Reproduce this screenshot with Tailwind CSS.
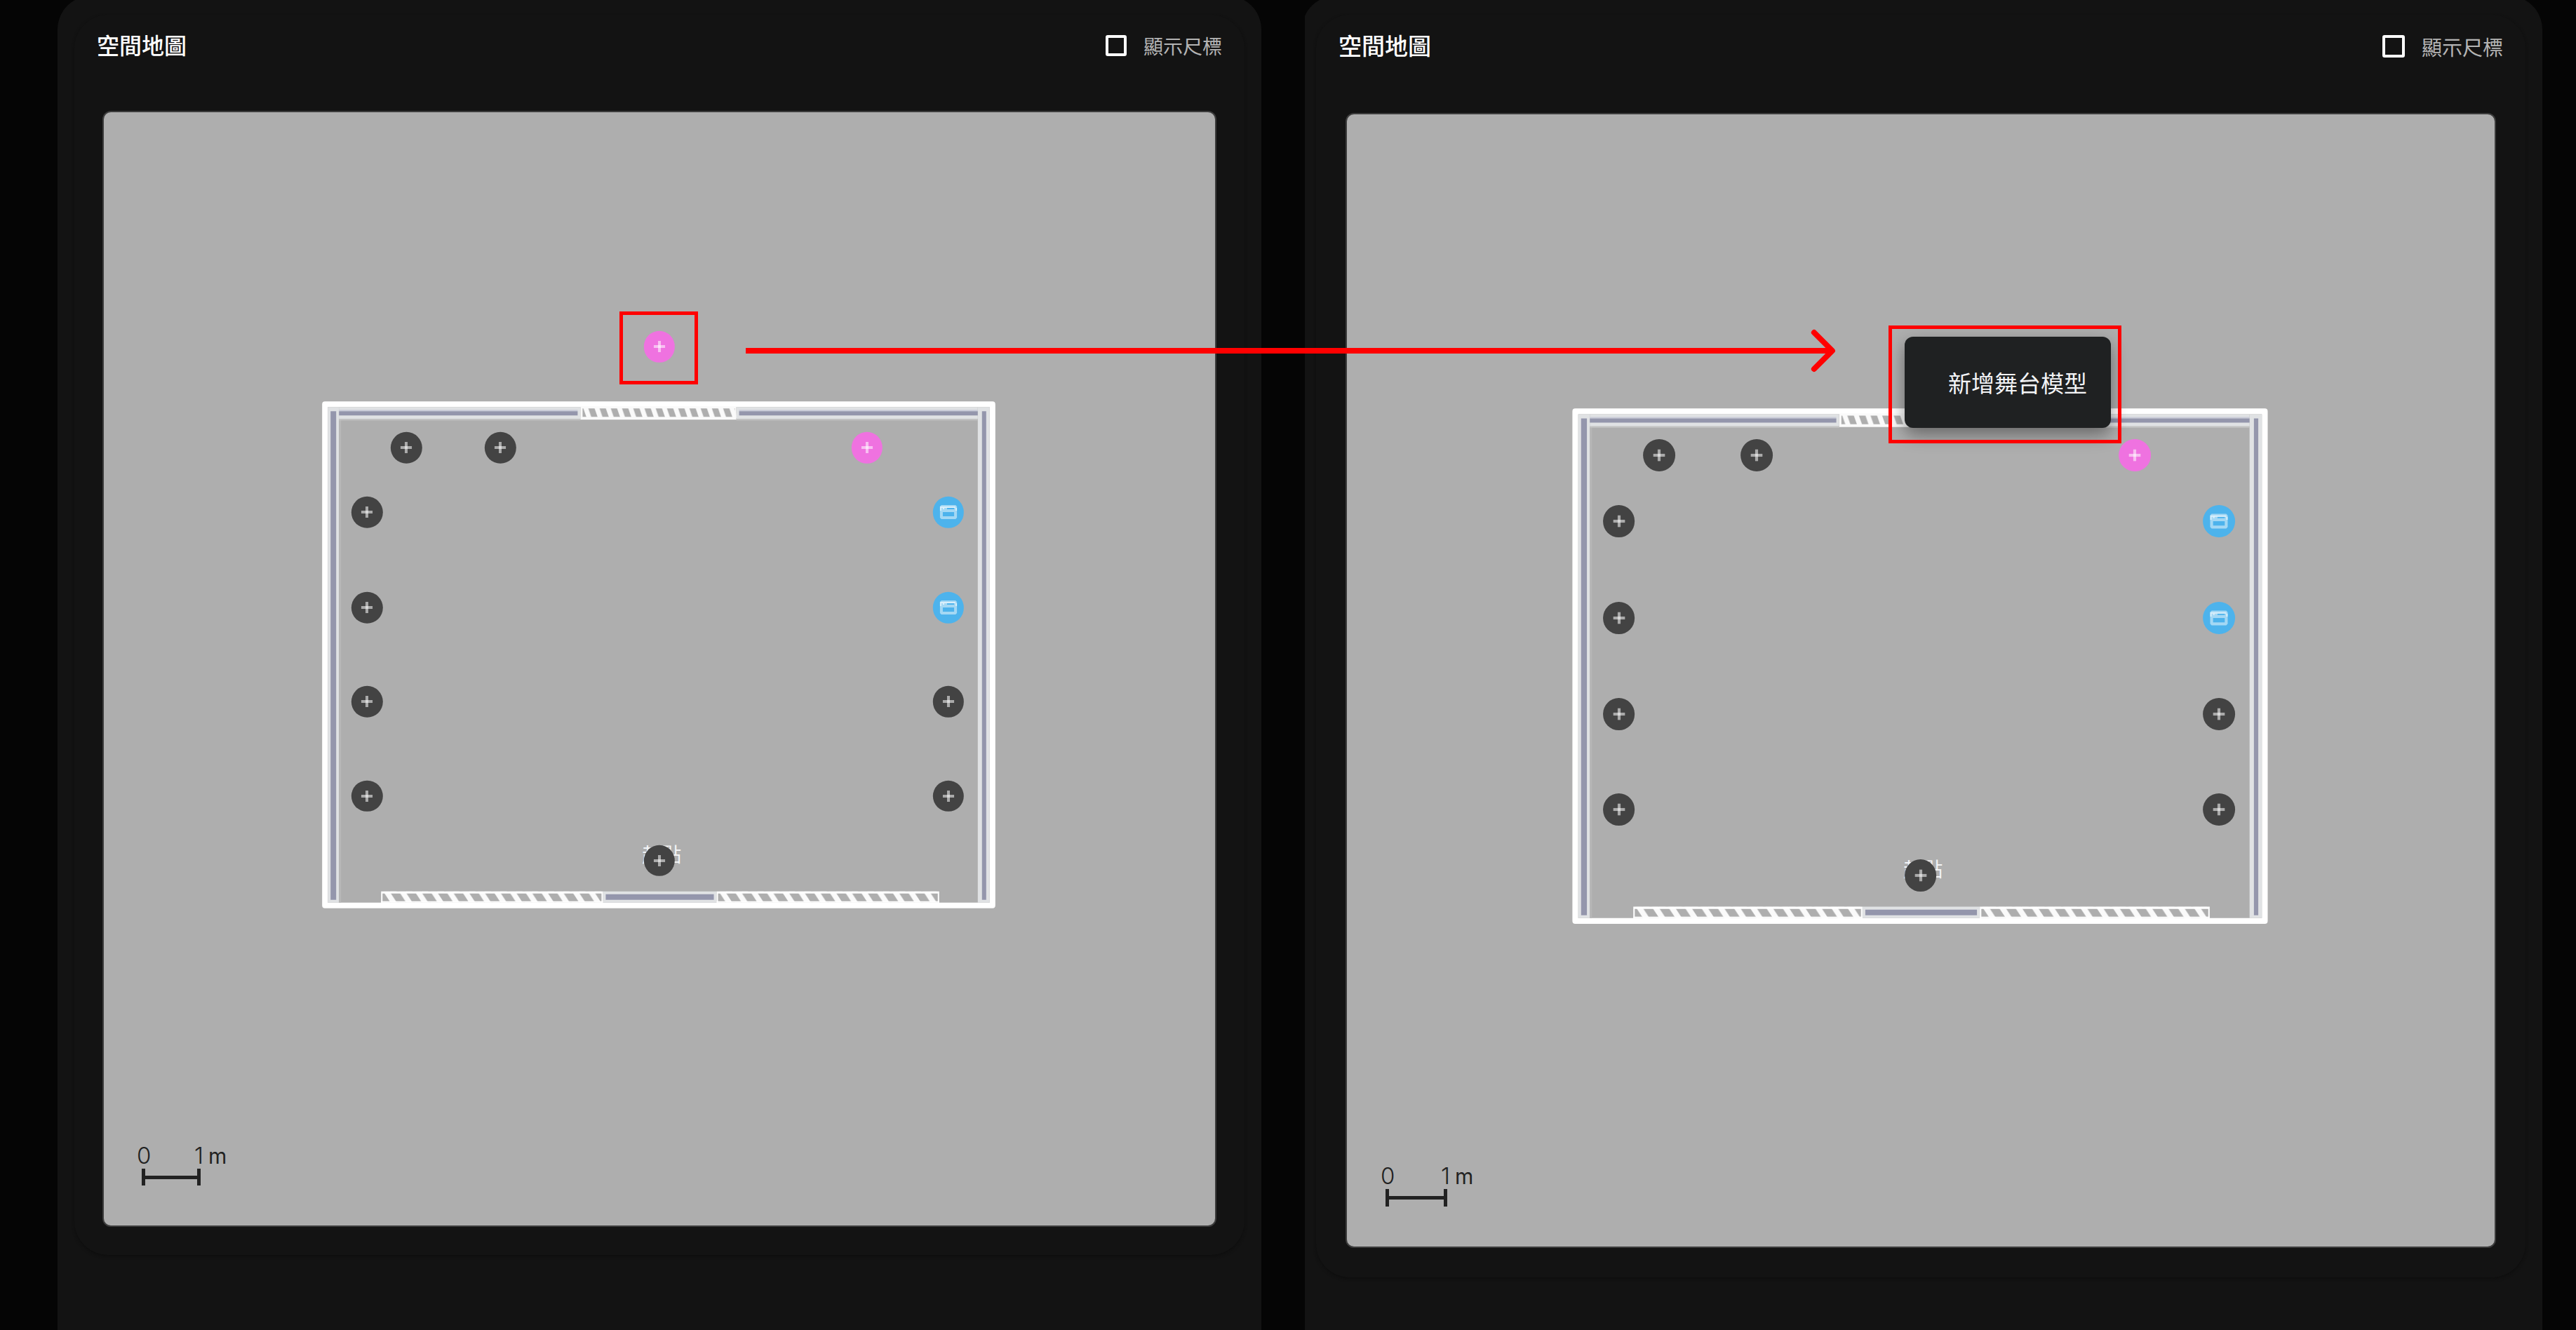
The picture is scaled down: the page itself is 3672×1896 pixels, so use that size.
<!DOCTYPE html>
<html lang="zh-Hant">
<head>
<meta charset="utf-8">
<title>空間地圖</title>
<script src="https://cdn.jsdelivr.net/npm/@tailwindcss/browser@4"></script>
</head>
<body class="bg-[#050505] font-['Noto_Sans_CJK_TC',sans-serif] text-white">

<!-- shared shapes -->
<svg class="absolute size-0" aria-hidden="true">
  <defs>
    <symbol id="plus" viewBox="0 0 44 44">
      <path d="M14 22H30" stroke="#fff" stroke-opacity=".55" stroke-width="4"/>
      <path d="M22 14V30" stroke="#fff" stroke-opacity=".55" stroke-width="4"/>
    </symbol>
    <symbol id="window" viewBox="0 0 44 44">
      <path fill="#a4d8f4" fill-rule="evenodd" d="M12 12H32L34 14V30L32 32H12L10 30V14ZM20 16V18H30V16ZM14 22V28H30V22Z"/>
      <path fill="#fff" fill-opacity=".6" d="M12 14H32V16H12ZM10 14h2v6h-2ZM32 16h2v4h-2ZM14 16h2v2h-2Z"/>
    </symbol>
    <pattern id="hatch-wide" patternUnits="userSpaceOnUse" x="544" y="1270" width="22.4" height="16">
      <path d="M3 0H12L22.4 16H13.4Z" fill="#fafafa"/>
    </pattern>
    <pattern id="hatch-wide-right" patternUnits="userSpaceOnUse" x="1022" y="1270" width="22.4" height="16">
      <path d="M3 0H12L22.4 16H13.4Z" fill="#fafafa"/>
    </pattern>
    <pattern id="hatch-narrow" patternUnits="userSpaceOnUse" x="828" y="580" width="16" height="16">
      <path d="M3.5 0H10.5L16 16H9Z" fill="#fafafa"/>
    </pattern>
    <symbol id="room" viewBox="149 160 1583 1586" preserveAspectRatio="none">
      <rect x="464" y="576" width="951" height="714" fill="none" stroke="#fff" stroke-width="8" stroke-linejoin="round"/>
      <!-- side walls -->
      <path fill="#e0e2e4" d="M468 580h16v706h-16ZM1394 580h17v706h-17Z"/>
      <path fill="#b7b7b7" d="M484 596h3v690h-3Z"/>
      <path fill="#9496ac" d="M472 586h8v696h-8ZM1400 586h6v696h-6Z"/>
      <!-- top wall -->
      <path fill="#e0e2e4" d="M484 580H828V597H484ZM1050 580H1394V597H1050Z"/>
      <path fill="#c9cbd8" d="M484 584H824V586H484ZM1054 584H1394V586H1054Z"/>
      <path fill="#9496ac" d="M484 586H824V592H484ZM1054 586H1394V592H1054Z"/>
      <path fill="#c4c4c4" d="M484 597H828V599H484ZM1050 597H1394V599H1050Z"/>
      <rect x="828" y="580" width="222" height="18" fill="#aeaeae"/>
      <rect x="828" y="580" width="222" height="16" fill="url(#hatch-narrow)"/>
      <path fill="#fafafa" d="M828 579H1050V582H828ZM828 594H1050V598H828ZM828 580h3v16h-3ZM1048 580h2v16h-2Z"/>
      <!-- bottom wall -->
      <path fill="#e0e2e4" d="M860 1270H1022V1286H860Z"/>
      <path fill="#9496ac" d="M864 1274H1018V1282H864Z"/>
      <rect x="544" y="1270" width="316" height="16" fill="url(#hatch-wide)"/>
      <rect x="1022" y="1270" width="317" height="16" fill="url(#hatch-wide-right)"/>
      <path fill="#fff" d="M544 1270H860V1273H544ZM544 1270h2v16h-2ZM858 1270h2v16h-2ZM1022 1270H1339V1273H1022ZM1022 1270h2v16h-2ZM1337 1270h2v16h-2Z"/>
      <path fill="#fff" d="M544 1284H860V1286H544ZM1022 1284H1339V1286H1022Z"/>
    </symbol>
  </defs>
</svg>

<main class="relative grid min-h-screen grid-cols-[1716fr_1764fr] gap-[62px] overflow-hidden pr-12 pl-[82px]">

  <section class="flex flex-col overflow-hidden">
    <div class="-mt-1.5 grow rounded-t-[48px] bg-[#131313] px-6 pt-[27px]">
      <div class="rounded-[48px] bg-[#131313] pb-10 shadow-[0_2px_4px_#0e0e0e]">
        <header class="flex h-[137px] items-start justify-between px-8 pt-[28px]">
          <h2 class="text-[32px] leading-7 font-medium">空間地圖</h2>
          <label class="flex h-8 items-center gap-6 text-[28px] leading-8 text-[#b4b4b4]">
            <input type="checkbox" class="size-[30px] appearance-none rounded-[3px] border-4 border-white">顯示尺標
          </label>
        </header>
        <div class="relative mx-10 aspect-[1587/1590] rounded-xl border-2 border-[#3c3c3c] bg-[#aeaeae]">
          <svg class="absolute inset-0 size-full"><use href="#room" width="100%" height="100%"/></svg>
          <span class="absolute -translate-1/2 text-[28px] leading-8 whitespace-nowrap text-gray-100" style="left:50.2%;top:66.6%">起點</span>

          <button aria-label="新增" class="absolute aspect-square w-[2.8%] -translate-1/2 rounded-full bg-[#ef72e0]" style="left:49.97%;top:21.06%"><svg class="size-full"><use href="#plus"/></svg></button>
          <button aria-label="新增" class="absolute aspect-square w-[2.8%] -translate-1/2 rounded-full bg-[#434343]" style="left:27.23%;top:30.14%"><svg class="size-full"><use href="#plus"/></svg></button>
          <button aria-label="新增" class="absolute aspect-square w-[2.8%] -translate-1/2 rounded-full bg-[#434343]" style="left:35.69%;top:30.14%"><svg class="size-full"><use href="#plus"/></svg></button>
          <button aria-label="新增" class="absolute aspect-square w-[2.8%] -translate-1/2 rounded-full bg-[#ef72e0]" style="left:68.67%;top:30.14%"><svg class="size-full"><use href="#plus"/></svg></button>
          <button aria-label="新增" class="absolute aspect-square w-[2.8%] -translate-1/2 rounded-full bg-[#434343]" style="left:23.69%;top:35.94%"><svg class="size-full"><use href="#plus"/></svg></button>
          <button aria-label="新增" class="absolute aspect-square w-[2.8%] -translate-1/2 rounded-full bg-[#434343]" style="left:23.69%;top:44.51%"><svg class="size-full"><use href="#plus"/></svg></button>
          <button aria-label="新增" class="absolute aspect-square w-[2.8%] -translate-1/2 rounded-full bg-[#434343]" style="left:23.69%;top:52.96%"><svg class="size-full"><use href="#plus"/></svg></button>
          <button aria-label="新增" class="absolute aspect-square w-[2.8%] -translate-1/2 rounded-full bg-[#434343]" style="left:23.69%;top:61.41%"><svg class="size-full"><use href="#plus"/></svg></button>
          <button aria-label="視窗" class="absolute aspect-square w-[2.8%] -translate-1/2 rounded-full bg-[#4db3ec]" style="left:75.99%;top:35.94%"><svg class="size-full"><use href="#window"/></svg></button>
          <button aria-label="視窗" class="absolute aspect-square w-[2.8%] -translate-1/2 rounded-full bg-[#4db3ec]" style="left:75.99%;top:44.51%"><svg class="size-full"><use href="#window"/></svg></button>
          <button aria-label="新增" class="absolute aspect-square w-[2.8%] -translate-1/2 rounded-full bg-[#434343]" style="left:75.99%;top:52.96%"><svg class="size-full"><use href="#plus"/></svg></button>
          <button aria-label="新增" class="absolute aspect-square w-[2.8%] -translate-1/2 rounded-full bg-[#434343]" style="left:75.99%;top:61.41%"><svg class="size-full"><use href="#plus"/></svg></button>
          <button aria-label="新增" class="absolute aspect-square w-[2.8%] -translate-1/2 rounded-full bg-[#434343]" style="left:49.97%;top:67.21%"><svg class="size-full"><use href="#plus"/></svg></button>

          <div class="absolute h-[104px] w-28 border-[5px] border-[#ff0000]" style="left:46.43%;top:17.91%"></div>

          <div class="absolute bottom-[57px] left-[47px] font-['Inter',sans-serif] text-[#222]">
            <div class="flex items-baseline leading-9"><span class="w-[82px] text-[33px] font-light">0</span><span class="w-5 text-[33px] font-light">1</span><span class="text-[30px]">m</span></div>
            <div class="ml-[7px] flex h-6 w-[84px] items-center border-x-[5px] border-[#222]"><div class="h-[5px] grow bg-[#222]"></div></div>
          </div>
        </div>
      </div>
    </div>
  </section>

  <section class="flex flex-col overflow-hidden">
    <div class="-mt-1.5 -ml-1 grow rounded-t-[48px] bg-[#131313] pt-[27px] pr-6 pl-5">
      <div class="rounded-[48px] bg-[#131313] pb-[42px] shadow-[0_2px_4px_#0e0e0e]">
        <header class="flex h-[140px] items-start justify-between px-8 pt-[29px]">
          <h2 class="text-[33px] leading-7 font-medium">空間地圖</h2>
          <label class="flex h-8 items-center gap-6 text-[29px] leading-8 text-[#b4b4b4]">
            <input type="checkbox" class="size-8 appearance-none rounded-[3px] border-4 border-white">顯示尺標
          </label>
        </header>
        <div class="relative mx-[42px] aspect-[1638/1616] rounded-xl border-2 border-[#3c3c3c] bg-[#aeaeae]">
          <svg class="absolute inset-0 size-full"><use href="#room" width="100%" height="100%"/></svg>
          <span class="absolute -translate-1/2 text-[28px] leading-8 whitespace-nowrap text-gray-100" style="left:50.2%;top:66.6%">起點</span>

          <button aria-label="新增" class="absolute aspect-square w-[2.8%] -translate-1/2 rounded-full bg-[#434343]" style="left:27.23%;top:30.14%"><svg class="size-full"><use href="#plus"/></svg></button>
          <button aria-label="新增" class="absolute aspect-square w-[2.8%] -translate-1/2 rounded-full bg-[#434343]" style="left:35.69%;top:30.14%"><svg class="size-full"><use href="#plus"/></svg></button>
          <button aria-label="新增" class="absolute aspect-square w-[2.8%] -translate-1/2 rounded-full bg-[#ef72e0]" style="left:68.67%;top:30.14%"><svg class="size-full"><use href="#plus"/></svg></button>
          <button aria-label="新增" class="absolute aspect-square w-[2.8%] -translate-1/2 rounded-full bg-[#434343]" style="left:23.69%;top:35.94%"><svg class="size-full"><use href="#plus"/></svg></button>
          <button aria-label="新增" class="absolute aspect-square w-[2.8%] -translate-1/2 rounded-full bg-[#434343]" style="left:23.69%;top:44.51%"><svg class="size-full"><use href="#plus"/></svg></button>
          <button aria-label="新增" class="absolute aspect-square w-[2.8%] -translate-1/2 rounded-full bg-[#434343]" style="left:23.69%;top:52.96%"><svg class="size-full"><use href="#plus"/></svg></button>
          <button aria-label="新增" class="absolute aspect-square w-[2.8%] -translate-1/2 rounded-full bg-[#434343]" style="left:23.69%;top:61.41%"><svg class="size-full"><use href="#plus"/></svg></button>
          <button aria-label="視窗" class="absolute aspect-square w-[2.8%] -translate-1/2 rounded-full bg-[#4db3ec]" style="left:75.99%;top:35.94%"><svg class="size-full"><use href="#window"/></svg></button>
          <button aria-label="視窗" class="absolute aspect-square w-[2.8%] -translate-1/2 rounded-full bg-[#4db3ec]" style="left:75.99%;top:44.51%"><svg class="size-full"><use href="#window"/></svg></button>
          <button aria-label="新增" class="absolute aspect-square w-[2.8%] -translate-1/2 rounded-full bg-[#434343]" style="left:75.99%;top:52.96%"><svg class="size-full"><use href="#plus"/></svg></button>
          <button aria-label="新增" class="absolute aspect-square w-[2.8%] -translate-1/2 rounded-full bg-[#434343]" style="left:75.99%;top:61.41%"><svg class="size-full"><use href="#plus"/></svg></button>
          <button aria-label="新增" class="absolute aspect-square w-[2.8%] -translate-1/2 rounded-full bg-[#434343]" style="left:49.97%;top:67.21%"><svg class="size-full"><use href="#plus"/></svg></button>

          <div role="menu" class="absolute flex h-[130px] w-[294px] items-center rounded-xl bg-[#1f2122] shadow-[0_10px_24px_rgba(0,0,0,0.4)]" style="left:48.59%;top:19.67%">
            <button role="menuitem" class="w-full pl-[62px] text-left text-[33px] leading-10 whitespace-nowrap text-gray-100">新增舞台模型</button>
          </div>
          <div class="absolute h-[168px] w-[332px] border-[5px] border-[#ff0000]" style="left:47.18%;top:18.67%"></div>

          <div class="absolute bottom-[57px] left-[48px] font-['Inter',sans-serif] text-[#222]">
            <div class="flex items-baseline leading-9"><span class="w-[86px] text-[33px] font-light">0</span><span class="w-5 text-[33px] font-light">1</span><span class="text-[30px]">m</span></div>
            <div class="ml-[7px] flex h-[25px] w-[88px] items-center border-x-[5px] border-[#222]"><div class="h-[5px] grow bg-[#222]"></div></div>
          </div>
        </div>
      </div>
    </div>
  </section>

  <!-- arrow that links the marker to its menu -->
  <svg class="pointer-events-none absolute inset-x-0 top-[470px] h-[60px] w-full overflow-visible" aria-hidden="true">
    <line x1="28.95%" y1="30" x2="71.1%" y2="30" stroke="#ff0000" stroke-width="8"/>
    <svg x="71.13%" y="0" overflow="visible"><path d="M-26 4 0 30-26 56" fill="none" stroke="#ff0000" stroke-width="8" stroke-linecap="round" stroke-linejoin="round"/></svg>
  </svg>
</main>
</body>
</html>
